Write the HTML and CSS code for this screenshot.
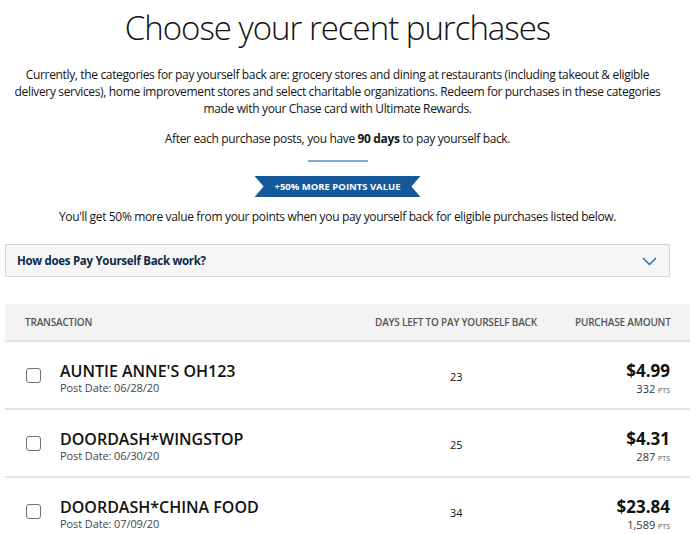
FILE: index.html
```html
<!DOCTYPE html>
<html lang="en">
<head>
<meta charset="utf-8">
<title>Choose your recent purchases</title>
<link rel="stylesheet" href="styles.css">
</head>
<body>
<main class="page">
  <header class="intro-block">
    <h1 class="title">Choose your recent purchases</h1>
    <p class="intro">Currently, the categories for pay yourself back are: grocery stores and dining at restaurants (including takeout &amp; eligible delivery services), home improvement stores and select charitable organizations. Redeem for purchases in these categories made with your Chase card with Ultimate Rewards.</p>
    <p class="deadline">After each purchase posts, you have <strong>90 days</strong> to pay yourself back.</p>
    <div class="divider"></div>
    <div class="ribbon-wrap">
      <div class="ribbon">+50% MORE POINTS VALUE</div>
    </div>
    <p class="bonus">You'll get 50% more value from your points when you pay yourself back for eligible purchases listed below.</p>
  </header>

  <div class="accordion">
    <span class="accordion-label">How does Pay Yourself Back work?</span>
    <svg class="chevron" width="15" height="9" viewBox="0 0 15 9" aria-hidden="true"><path d="M1 1 L7.5 7.5 L14 1" fill="none" stroke="#1a6bb5" stroke-width="1.4"/></svg>
  </div>

  <section class="table">
    <div class="thead">
      <div class="col-txn">TRANSACTION</div>
      <div class="col-days">DAYS LEFT TO PAY YOURSELF BACK</div>
      <div class="col-amt">PURCHASE AMOUNT</div>
    </div>

    <div class="row">
      <div class="col-txn cell-txn">
        <span class="checkbox"></span>
        <div class="txn-info">
          <div class="merchant">AUNTIE ANNE'S OH123</div>
          <div class="post-date">Post Date: 06/28/20</div>
        </div>
      </div>
      <div class="col-days cell-days">23</div>
      <div class="col-amt cell-amt">
        <div class="amount">$4.99</div>
        <div class="points">332 <span class="pts">PTS</span></div>
      </div>
    </div>

    <div class="row">
      <div class="col-txn cell-txn">
        <span class="checkbox"></span>
        <div class="txn-info">
          <div class="merchant">DOORDASH*WINGSTOP</div>
          <div class="post-date">Post Date: 06/30/20</div>
        </div>
      </div>
      <div class="col-days cell-days">25</div>
      <div class="col-amt cell-amt">
        <div class="amount">$4.31</div>
        <div class="points">287 <span class="pts">PTS</span></div>
      </div>
    </div>

    <div class="row">
      <div class="col-txn cell-txn">
        <span class="checkbox"></span>
        <div class="txn-info">
          <div class="merchant">DOORDASH*CHINA FOOD</div>
          <div class="post-date">Post Date: 07/09/20</div>
        </div>
      </div>
      <div class="col-days cell-days">34</div>
      <div class="col-amt cell-amt">
        <div class="amount">$23.84</div>
        <div class="points">1,589 <span class="pts">PTS</span></div>
      </div>
    </div>
  </section>
</main>
</body>
</html>
```
FILE: styles.css
```css
* { box-sizing: border-box; }
html, body { margin: 0; padding: 0; background: #fff; }
body {
  font-family: "Open Sans", "Liberation Sans", sans-serif;
  color: #111;
  overflow: hidden;
}
.page {
  width: 700px;
  padding: 0 10px 0 5px;
}
.intro-block {
  margin-right: 20px;
}
.title {
  margin: 7px 0 0;
  font-size: 33px;
  font-weight: 300;
  letter-spacing: -1px;
  line-height: 42px;
  text-align: center;
  color: #111;
}
.intro,
.deadline,
.bonus {
  font-size: 12px;
  letter-spacing: -0.35px;
  line-height: 17px;
  text-align: center;
  color: #151515;
}
.intro { margin: 17px 0 0; }
.deadline { margin: 13px 0 0; }
.deadline strong { font-weight: 700; }
.divider {
  width: 60px;
  height: 2px;
  background: #7ea9d6;
  margin: 13px auto 0;
}
.ribbon-wrap {
  display: flex;
  justify-content: center;
  margin-top: 14px;
}
.ribbon {
  width: 166px;
  height: 21px;
  background: #15599a;
  color: #fff;
  font-size: 9.5px;
  font-weight: 700;
  line-height: 21px;
  text-align: center;
  clip-path: polygon(0 0, 100% 0, 94.5% 50%, 100% 100%, 0 100%, 5.5% 50%);
}
.bonus { margin: 11px 0 0; }
.accordion {
  margin-top: 19px;
  width: 665px;
  height: 33px;
  border: 1px solid #d6d6d6;
  background: #f6f6f6;
  display: flex;
  align-items: center;
  justify-content: space-between;
  padding: 0 12px 0 11px;
}
.accordion-label {
  font-size: 11.5px;
  font-weight: 700;
  letter-spacing: -0.3px;
  color: #0d2a4a;
}
.chevron { display: block; margin-top: 1px; }

.table { margin-top: 27px; width: 685px; }
.thead {
  height: 38px;
  background: #f3f3f3;
  border-bottom: 2px solid #e2e2e2;
  display: flex;
  align-items: center;
  font-size: 10px;
  font-weight: 600;
  letter-spacing: -0.2px;
  color: #555;
  white-space: nowrap;
}
.col-txn { flex: 1; padding-left: 20px; }
.col-days { width: 200px; text-align: left; }
.col-amt { width: 115px; text-align: right; padding-right: 20px; }

.row {
  height: 68px;
  border-bottom: 2px solid #e2e2e2;
  display: flex;
  align-items: center;
}
.cell-txn { display: flex; align-items: center; gap: 19px; }
.checkbox {
  flex: none;
  width: 15px;
  height: 15px;
  border: 1px solid #707070;
  border-radius: 3px;
  background: #fff;
  margin-left: 1px;
}
.txn-info { padding-top: 6px; }
.merchant {
  font-size: 16px;
  font-weight: 600;
  line-height: 19px;
  color: #111;
  white-space: nowrap;
}
.post-date {
  font-size: 11px;
  letter-spacing: -0.1px;
  line-height: 13px;
  color: #444;
}
.cell-days {
  font-size: 11px;
  padding-left: 75px;
  padding-top: 2px;
}
.cell-amt { padding-top: 8px; }
.amount {
  font-size: 17px;
  font-weight: 700;
  line-height: 22px;
  color: #111;
}
.points {
  font-size: 11px;
  line-height: 14px;
  color: #333;
}
.pts { font-size: 7px; color: #555; }
```
